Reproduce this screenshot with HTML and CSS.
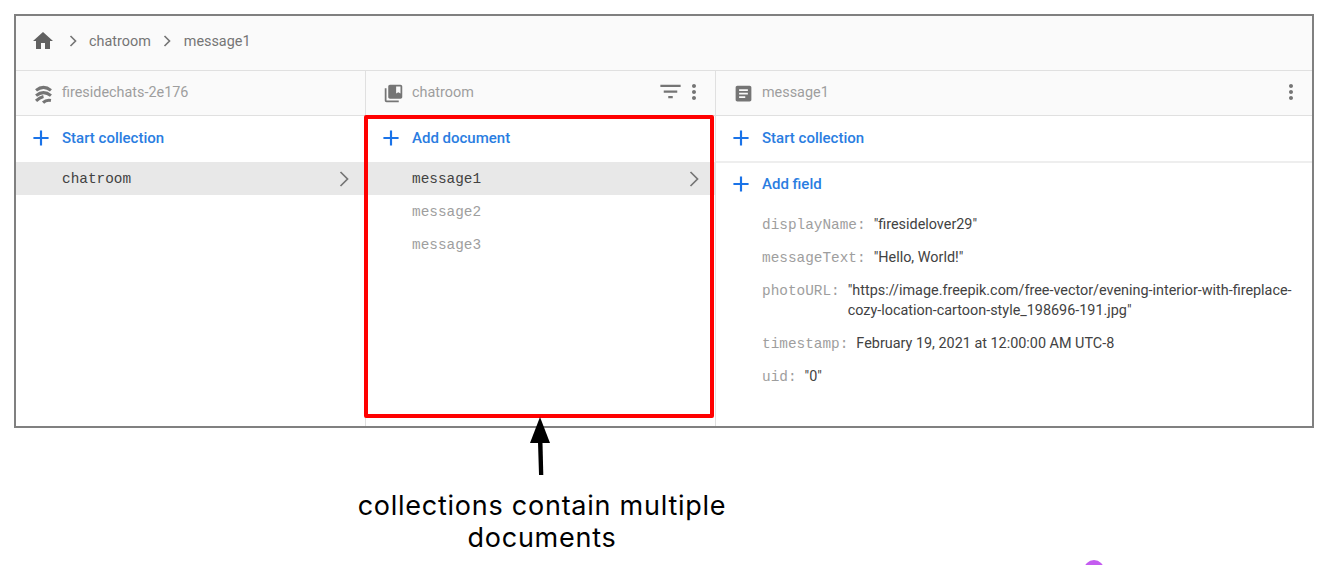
FILE: index.html
```html
<!DOCTYPE html>
<html lang="en">

<head>
    <title>Cloud Firestore data</title>
    <meta name="viewport" content="width=device-width, initial-scale=1.0">
    <link rel="stylesheet" href="styles.css">
</head>

<body>
    <div class="page">
        <div class="frame">
            <div class="crumbs">
                <svg class="home-icon" viewBox="0 0 24 24"><path d="M10 20v-6h4v6h5v-8h3L12 3 2 12h3v8z"/></svg>
                <svg class="crumb-sep" viewBox="0 0 24 24"><path d="M9 6l6 6-6 6"/></svg>
                <span>chatroom</span>
                <svg class="crumb-sep" viewBox="0 0 24 24"><path d="M9 6l6 6-6 6"/></svg>
                <span>message1</span>
            </div>

            <div class="columns">
                <div class="column">
                    <div class="col-head">
                        <svg class="head-icon project-icon" viewBox="0 0 24 24"><path d="M3.500 8.500Q12 1.500 20.500 8.500M3.500 14.500Q12 7.500 20.500 14.500M3.500 20.500Q7.500 16.500 12 15.500M11.500 22.500Q15 19 20.500 20"/></svg>
                        <span>firesidechats-2e176</span>
                    </div>
                    <div class="action-row">
                        <svg class="add-icon" viewBox="0 0 24 24"><path d="M19 13h-6v6h-2v-6H5v-2h6V5h2v6h6v2z"/></svg>
                        <span>Start collection</span>
                    </div>
                    <div class="list-item selected">
                        <span>chatroom</span>
                        <svg class="chevron" viewBox="0 0 24 24"><path d="M9 6l6 6-6 6"/></svg>
                    </div>
                </div>

                <div class="column">
                    <div class="col-head">
                        <svg class="head-icon" viewBox="0 0 24 24"><path d="M4 6H2v14c0 1.100.9 2 2 2h14v-2H4V6zm16-4H8c-1.100 0-2 .9-2 2v12c0 1.100.9 2 2 2h12c1.100 0 2-.9 2-2V4c0-1.100-.9-2-2-2zm0 10l-2.500-1.500L15 12V4h5v8z"/></svg>
                        <span>chatroom</span>
                        <svg class="tool-icon filter-icon" viewBox="0 0 24 24"><path d="M10 18h4v-2h-4v2zM3 6v2h18V6H3zm3 7h12v-2H6v2z"/></svg>
                        <svg class="tool-icon" viewBox="0 0 24 24"><path d="M12 8c1.100 0 2-.9 2-2s-.9-2-2-2-2 .9-2 2 .9 2 2 2zm0 2c-1.100 0-2 .9-2 2s.9 2 2 2 2-.9 2-2-.9-2-2-2zm0 6c-1.100 0-2 .9-2 2s.9 2 2 2 2-.9 2-2-.9-2-2-2z"/></svg>
                    </div>
                    <div class="action-row">
                        <svg class="add-icon" viewBox="0 0 24 24"><path d="M19 13h-6v6h-2v-6H5v-2h6V5h2v6h6v2z"/></svg>
                        <span>Add document</span>
                    </div>
                    <div class="list-item selected">
                        <span>message1</span>
                        <svg class="chevron" viewBox="0 0 24 24"><path d="M9 6l6 6-6 6"/></svg>
                    </div>
                    <div class="list-item">message2</div>
                    <div class="list-item">message3</div>
                </div>

                <div class="column">
                    <div class="col-head">
                        <svg class="head-icon" viewBox="0 0 24 24"><path d="M19 3H5c-1.100 0-2 .9-2 2v14c0 1.100.9 2 2 2h14c1.100 0 2-.9 2-2V5c0-1.100-.9-2-2-2zm-5 14H7v-2h7v2zm3-4H7v-2h10v2zm0-4H7V7h10v2z"/></svg>
                        <span>message1</span>
                        <svg class="tool-icon push-right" viewBox="0 0 24 24"><path d="M12 8c1.100 0 2-.9 2-2s-.9-2-2-2-2 .9-2 2 .9 2 2 2zm0 2c-1.100 0-2 .9-2 2s.9 2 2 2 2-.9 2-2-.9-2-2-2zm0 6c-1.100 0-2 .9-2 2s.9 2 2 2 2-.9 2-2-.9-2-2-2z"/></svg>
                    </div>
                    <div class="action-row divided">
                        <svg class="add-icon" viewBox="0 0 24 24"><path d="M19 13h-6v6h-2v-6H5v-2h6V5h2v6h6v2z"/></svg>
                        <span>Start collection</span>
                    </div>
                    <div class="action-row">
                        <svg class="add-icon" viewBox="0 0 24 24"><path d="M19 13h-6v6h-2v-6H5v-2h6V5h2v6h6v2z"/></svg>
                        <span>Add field</span>
                    </div>
                    <div class="fields">
                        <div class="field"><span class="key">displayName:</span><span class="value">"firesidelover29"</span></div>
                        <div class="field"><span class="key">messageText:</span><span class="value">"Hello, World!"</span></div>
                        <div class="field"><span class="key">photoURL:</span><span class="value">"https://image.freepik.com/free-vector/evening-interior-with-fireplace-cozy-location-cartoon-style_198696-191.jpg"</span></div>
                        <div class="field"><span class="key">timestamp:</span><span class="value">February 19, 2021 at 12:00:00 AM UTC-8</span></div>
                        <div class="field"><span class="key">uid:</span><span class="value">"0"</span></div>
                    </div>
                </div>
            </div>
        </div>

        <p class="caption">collections contain multiple documents</p>

        <!-- annotations drawn over the screenshot -->
        <div class="highlight"></div>
        <svg class="arrow" viewBox="0 0 24 60"><path d="M11 0L21 26H1z"/><path d="M9 26h4.500l.8 32H10z"/></svg>
        <div class="blob"></div>
    </div>
</body>
</html>
```

FILE: styles.css
```css
html, body {
    margin: 0;
    height: 100%;
    overflow: hidden;
    background-color: #fff;
}
.page {
    position: relative;
    height: 100%;
    box-sizing: border-box;
    padding: 14px 0 0 14px;
    font-family: Roboto, "Liberation Sans", sans-serif;
    font-size: 14.4px;
}
.frame {
    width: 1300px;
    height: 414px;
    box-sizing: border-box;
    border: 2px solid #808080;
    display: flex;
    flex-direction: column;
}
.crumbs {
    height: 55px;
    flex: none;
    box-sizing: border-box;
    padding: 0 0 4px 15px;
    background-color: #fafafa;
    border-bottom: 1px solid #e0e0e0;
    display: flex;
    align-items: center;
    color: #757575;
}
.home-icon {
    width: 24px;
    height: 24px;
    fill: #616161;
    margin-right: 5px;
}
.crumb-sep {
    width: 20px;
    height: 20px;
    fill: none;
    stroke: #757575;
    stroke-width: 2;
    margin: 0 6px 0 3px;
}
.crumb-sep + span + .crumb-sep {
    margin: 0 7px 0 6px;
}
.columns {
    flex: 1;
    display: grid;
    grid-template-columns: 350px 350px 1fr;
}
.column {
    border-right: 1px solid #e0e0e0;
}
.column:last-child {
    border-right: none;
}
.col-head {
    height: 45px;
    box-sizing: border-box;
    padding: 0 9px 2px 17px;
    background-color: #fafafa;
    border-bottom: 1px solid #e0e0e0;
    display: flex;
    align-items: center;
    gap: 8px;
    color: #9e9e9e;
}
.head-icon {
    width: 21px;
    height: 21px;
    margin-top: 2px;
    fill: #757575;
    flex: none;
}
.project-icon {
    fill: none;
    stroke: #757575;
    stroke-width: 3.500;
}
.tool-icon {
    width: 24px;
    height: 24px;
    fill: #757575;
    flex: none;
}
.push-right {
    margin-left: auto;
}
.filter-icon {
    margin-left: auto;
    margin-right: -10px;
    margin-bottom: 2px;
    width: 27px;
    height: 27px;
}
.action-row {
    height: 46px;
    box-sizing: border-box;
    padding: 0 0 2px 12px;
    display: flex;
    align-items: center;
    gap: 8px;
    color: #2a7de1;
    font-size: 15px;
    font-weight: 500;
}
.action-row.divided {
    border-bottom: 2px solid #eeeeee;
    height: 47px;
    padding-bottom: 1px;
}
.action-row.divided + .action-row {
    height: 44px;
}
.add-icon {
    width: 26px;
    height: 26px;
    fill: #1a73e8;
    flex: none;
}
.list-item {
    height: 33px;
    box-sizing: border-box;
    padding: 0 7px 0 46px;
    display: flex;
    align-items: center;
    justify-content: space-between;
    font-family: "Liberation Mono", monospace;
    font-size: 14.4px;
    color: #9e9e9e;
}
.list-item.selected {
    background-color: #e8e8e8;
    color: #424242;
}
.chevron {
    width: 28px;
    height: 28px;
    fill: none;
    stroke: #757575;
    stroke-width: 1.500;
}
.fields {
    padding: 8px 19px 0 46px;
}
.field {
    display: flex;
    align-items: baseline;
    gap: 8px;
    line-height: 20px;
    margin-bottom: 13px;
    color: #424242;
}
.key {
    flex: none;
    line-height: 16px;
    font-family: "Liberation Mono", monospace;
    font-size: 14.4px;
    color: #9e9e9e;
}
.caption {
    width: 400px;
    margin: 62px 0 0 328px;
    font-family: Inter, "Open Sans", sans-serif;
    font-size: 27px;
    letter-spacing: 0.75px;
    line-height: 32px;
    text-align: center;
    color: #000;
}
.highlight {
    position: absolute;
    left: 364px;
    top: 115px;
    width: 350px;
    height: 303px;
    box-sizing: border-box;
    border: 4px solid #ff0000;
    border-radius: 2px;
}
.arrow {
    position: absolute;
    left: 529px;
    top: 417px;
    width: 24px;
    height: 60px;
    fill: #000;
}
.blob {
    position: absolute;
    left: 1084px;
    top: 560px;
    width: 20px;
    height: 20px;
    border-radius: 50%;
    background-color: #c45cf0;
}
```
